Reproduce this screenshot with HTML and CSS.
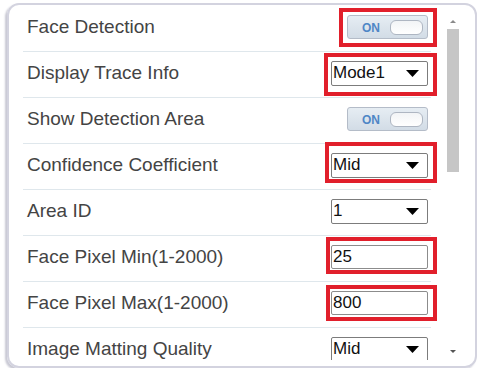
FILE: index.html
```html
<!DOCTYPE html>
<html>
<head>
    <meta charset="UTF-8">
    <title>Face Detection Settings</title>
    <link rel="stylesheet" href="styles.css">
</head>
<body>
    <div class="panel">
        <div class="list">
            <div class="row">
                <span class="label">Face Detection</span>
                <div class="ctl">
                    <div class="toggle"><span class="on">ON</span><span class="knob"></span></div>
                    <span class="mark m1"></span>
                </div>
            </div>
            <div class="row">
                <span class="label">Display Trace Info</span>
                <div class="ctl">
                    <div class="select"><span>Mode1</span><svg width="13" height="7" viewBox="0 0 13 7"><path d="M0 0H13L6.5 7Z" fill="#000"/></svg></div>
                    <span class="mark m2"></span>
                </div>
            </div>
            <div class="row">
                <span class="label">Show Detection Area</span>
                <div class="ctl">
                    <div class="toggle"><span class="on">ON</span><span class="knob"></span></div>
                </div>
            </div>
            <div class="row">
                <span class="label">Confidence Coefficient</span>
                <div class="ctl">
                    <div class="select"><span>Mid</span><svg width="13" height="7" viewBox="0 0 13 7"><path d="M0 0H13L6.5 7Z" fill="#000"/></svg></div>
                    <span class="mark m3"></span>
                </div>
            </div>
            <div class="row">
                <span class="label">Area ID</span>
                <div class="ctl">
                    <div class="select"><span>1</span><svg width="13" height="7" viewBox="0 0 13 7"><path d="M0 0H13L6.5 7Z" fill="#000"/></svg></div>
                </div>
            </div>
            <div class="row">
                <span class="label">Face Pixel Min(1-2000)</span>
                <div class="ctl">
                    <input class="field" type="text" value="25">
                    <span class="mark m4"></span>
                </div>
            </div>
            <div class="row">
                <span class="label">Face Pixel Max(1-2000)</span>
                <div class="ctl">
                    <input class="field" type="text" value="800">
                    <span class="mark m5"></span>
                </div>
            </div>
            <div class="row">
                <span class="label">Image Matting Quality</span>
                <div class="ctl">
                    <div class="select"><span>Mid</span><svg width="13" height="7" viewBox="0 0 13 7"><path d="M0 0H13L6.5 7Z" fill="#000"/></svg></div>
                </div>
            </div>
        </div>
        <div class="scroll">
            <span class="arrow up"></span>
            <div class="thumb"></div>
            <span class="arrow down"></span>
        </div>
    </div>
</body>
</html>
```

FILE: styles.css
```css
body {
    margin: 0;
    background: #fff;
    font-family: "Liberation Sans", Arial, sans-serif;
}

.panel {
    display: flex;
    box-sizing: border-box;
    width: 470px;
    height: 365px;
    margin: 3px 7px 0;
    padding: 1px 14px 0 14px;
    border: 2px solid #d3d3df;
    border-radius: 12px;
    box-shadow: -2px 2px 2px #c9c9d4;
}

/* extra right padding so the red frames are not clipped */
.list {
    width: 408px;
    height: 354px;
    padding-right: 9px;
    overflow: hidden;
}

.row {
    display: flex;
    align-items: center;
    justify-content: space-between;
    box-sizing: border-box;
    height: 46px;
    padding: 0 3px 3px 4px;
    border-bottom: 1px solid #dfe7ec;
}

.label {
    font-size: 19px;
    color: #444;
}

.ctl {
    position: relative;
    display: flex;
}

/* red annotation frames */
.mark {
    position: absolute;
    border: 4px solid #e11f2b;
    pointer-events: none;
}
.m1 { top: -7px; bottom: -8px; left: -8px; right: -9px; }
.m2 { top: -8px; bottom: -10px; left: -7px; right: -9px; }
.m3 { top: -11px; bottom: -5px; left: -6px; right: -9px; }
.m4 { top: -8px; bottom: -5px; left: -5px; right: -9px; }
.m5 { top: -6px; bottom: -6px; left: -5px; right: -9px; }

.toggle {
    position: relative;
    box-sizing: border-box;
    width: 81px;
    height: 24px;
    border: 1px solid #b4bcc8;
    border-radius: 3px;
    background: linear-gradient(#e6edf3, #d2dce6);
}

.on {
    position: absolute;
    left: 14px;
    top: 5px;
    font-size: 12px;
    font-weight: bold;
    color: #4f86c6;
}

.knob {
    position: absolute;
    right: 4px;
    top: 4px;
    box-sizing: border-box;
    width: 33px;
    height: 15px;
    border: 1px solid #aeb6c2;
    border-radius: 6px;
    background: linear-gradient(#f2f4f6, #fff);
}

.select {
    display: flex;
    align-items: center;
    justify-content: space-between;
    box-sizing: border-box;
    width: 97px;
    height: 25px;
    padding: 0 8px 0 1px;
    border: 1px solid #7c7c7c;
    border-radius: 2px;
    font-size: 17px;
    color: #111;
}

.field {
    box-sizing: border-box;
    width: 97px;
    height: 24px;
    margin: 0;
    padding: 0 1px;
    border: 1px solid #8c8c8c;
    border-radius: 2px;
    font-family: "Liberation Sans", Arial, sans-serif;
    font-size: 17px;
    color: #111;
}

.scroll {
    display: flex;
    flex-direction: column;
    align-items: center;
    width: 16px;
    margin-left: 5px;
    height: 354px;
}

.arrow {
    width: 0;
    height: 0;
    border-left: 3px solid transparent;
    border-right: 3px solid transparent;
}
.arrow.up {
    margin-top: 14px;
    border-bottom: 3px solid #8a8a8a;
}
.arrow.down {
    margin-top: auto;
    margin-bottom: 7px;
    border-top: 3px solid #555;
}

.thumb {
    width: 12px;
    height: 143px;
    margin-top: 6px;
    background: #c6c6c6;
}
```
